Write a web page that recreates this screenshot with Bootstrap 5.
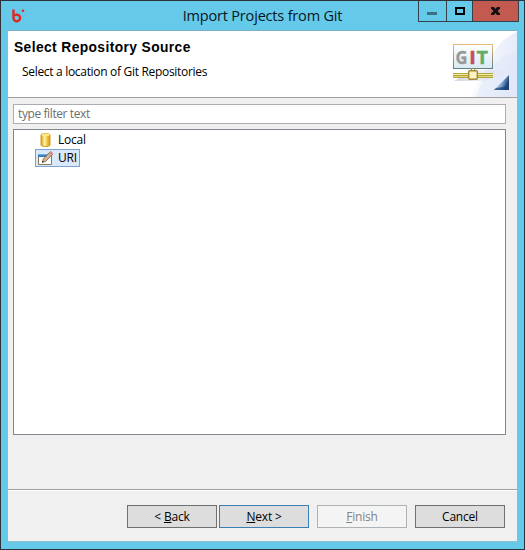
<!DOCTYPE html>
<html lang="en">
<head>
<meta charset="utf-8">
<meta name="viewport" content="width=device-width, initial-scale=1">
<title>Import Projects from Git</title>
<link href="https://cdn.jsdelivr.net/npm/bootstrap@5.3.0/dist/css/bootstrap.min.css" rel="stylesheet">
<style>
body{font-family:"Open Sans","Noto Sans",sans-serif;font-size:12px;line-height:16px;color:#000;width:525px;height:550px;overflow:hidden}
.window{width:525px;height:550px;background:#65c9e9;border:1px solid #2e3238;padding:0 7px 7px}
.titlebar{height:29px;flex:none}
.win-title{font-size:14.5px;line-height:29px;letter-spacing:-.18px;color:#06171d;white-space:nowrap}
.caption-btns{top:0;right:5px;height:21px;border:1px solid #35424b;border-top:0}
.cap{border:0;padding:0;height:20px;background:#65c9e9;display:block}
.cap+.cap{border-left:1px solid #35424b}
.cap-min{width:27px}.cap-max{width:26px}.cap-close{width:46px;background:#c35a50}
.logo-b{left:11px;top:7px}
.client{background:#f0f0f0;border-top:1px solid #7caec6;border-bottom:1px solid #8ec0d2}
.banner{height:67px;background:#fff;border-bottom:1px solid #a0a0a0;flex:none}
.banner h1{font:bold 13.8px/16px "Liberation Sans",Arial,sans-serif;margin:9px 0 0 6px;letter-spacing:.4px;white-space:nowrap}
.banner p{margin:8px 0 0 14px;letter-spacing:-.31px}
.filter{height:20px;margin:6px 11px 0 5px;border:1px solid #abadb3;border-radius:0;padding:0 4px;font-size:12px;line-height:16px;padding-bottom:1px;min-height:0;background:#fff;width:auto;color:#6d6d6d;letter-spacing:-.4px}
.filter::placeholder{color:#6d6d6d;opacity:1}
.tree{margin:5px 11px 0 5px;height:306px;border:1px solid #828790;background:#fff;padding:1px 0 0 21px;flex:none}
.node{height:18px;border:1px solid transparent;padding:0 2px 0 2px;line-height:16px;letter-spacing:-.25px}
.node.selected{background:#d9e8fb;border-color:#7da2ce}
.node svg{margin-right:4px}
.footer-bar{margin-top:54px;border-top:1px solid #a0a0a0;box-shadow:inset 0 1px #fff;padding:15px 12px 0 119px;flex:1}
.wbtn{width:90px;height:23px;padding:0;border:1px solid #707070;border-radius:0;background:#ddd;font-size:12px;line-height:20px;color:#000;letter-spacing:-.2px}
.wbtn.default{border-color:#3c7fb1;margin-left:2px}
.wbtn:disabled{background:#f4f4f4;border-color:#adb2b5;color:#838383;opacity:1}
</style>
</head>
<body>
<div class="window d-flex flex-column position-relative">
  <header class="titlebar d-flex justify-content-center">
    <svg class="logo-b position-absolute" width="16" height="16" viewBox="0 0 16 16"><path d="M1.5 1.5v8.7a3.3 3.3 0 1 0 1.2-2.8" fill="none" stroke="#e32620" stroke-width="2.4"/><circle cx="11" cy="2.7" r="1.3" fill="#e32620"/></svg>
    <span class="win-title">Import Projects from Git</span>
    <div class="caption-btns d-flex position-absolute">
      <button class="cap cap-min" aria-label="Minimize"><svg class="d-block" width="27" height="20"><path d="M8 11h10v3H8z" fill="#3b6f82"/></svg></button>
      <button class="cap cap-max" aria-label="Maximize"><svg class="d-block" width="25" height="20"><path d="M9 7h8v6H9z" fill="none" stroke="#000" stroke-width="2"/></svg></button>
      <button class="cap cap-close" aria-label="Close"><svg class="d-block" width="45" height="20"><path d="M18 6h3l1.5 2L24 6h3v1.5L24.5 10l2.5 2.5V14h-3l-1.5-2-1.5 2h-3v-1.5l2.5-2.5L18 7.5z" fill="#111"/></svg></button>
    </div>
  </header>
  <main class="client d-flex flex-column flex-grow-1">
    <section class="banner d-flex justify-content-between">
      <div><h1>Select Repository Source</h1><p>Select a location of Git Repositories</p></div>
      <svg width="75" height="66" viewBox="0 0 75 66">
        <defs>
          <linearGradient id="sky" x1="0" y1="0" x2="1" y2=".2"><stop offset="0" stop-color="#fff"/><stop offset="1" stop-color="#e6ebfa"/></linearGradient>
          <linearGradient id="frame" x2="0" y2="1"><stop offset="0" stop-color="#e5b878"/><stop offset="1" stop-color="#628184"/></linearGradient>
          <linearGradient id="panel" x2="0" y2="1"><stop offset="0" stop-color="#fff"/><stop offset="1" stop-color="#d9eaf2"/></linearGradient>
          <linearGradient id="tri" x1="0" x2="1" y2=".4"><stop offset=".2" stop-color="#d8e8f6"/><stop offset=".65" stop-color="#7ba6d6"/><stop offset="1" stop-color="#1c3f6d"/></linearGradient>
          <linearGradient id="shade"><stop offset="0" stop-color="#bdb5d3" stop-opacity=".6"/><stop offset="1" stop-color="#cfcde5" stop-opacity="0"/></linearGradient>
        </defs>
        <path d="M75 1Q57 8 49 27L28 66h47z" fill="url(#sky)"/>
        <path d="M75 22Q54 24 42 46L34 66h41z" fill="#dce4f8" opacity=".4"/>
        <path d="M12 50L30 39h37q-10 10-32 11z" fill="url(#shade)"/>
        <rect x="11.5" y="13.5" width="39" height="24" fill="url(#panel)" stroke="url(#frame)"/>
        <g font-family="Open Sans" font-size="17" font-weight="700" stroke-width=".3"><text x="13.5" y="32.5" fill="#999" stroke="#999" textLength="12" lengthAdjust="spacingAndGlyphs">G</text><text x="27" y="32.5" fill="#c64d55" stroke="#c64d55" textLength="7" lengthAdjust="spacingAndGlyphs">I</text><text x="34.5" y="32.5" fill="#62ac66" stroke="#62ac66" textLength="11.5" lengthAdjust="spacingAndGlyphs">T</text></g>
        <path d="M29.5 37v4m3-4v4" stroke="#9b9140"/>
        <path d="M11 42h40v5H11z" fill="#b2a83a"/><path d="M11 43.5h40" stroke="#f0edaa"/><path d="M11 45.5h40" stroke="#ddd577"/>
        <rect x="26.7" y="39.7" width="8.6" height="8.6" rx="1" fill="#fff0c5" stroke="#a08a32" stroke-width="1.4"/>
        <path d="M67 44v15H52z" fill="url(#tri)"/><path d="M62 56l5-3v6H52l2-2z" fill="#1c4678" opacity=".75"/>
      </svg>
    </section>
    <input class="filter form-control" placeholder="type filter text" aria-label="type filter text">
    <div class="tree d-flex flex-column align-items-start">
      <div class="node d-flex align-items-center">
        <svg width="16" height="16" viewBox="0 0 16 16"><defs><linearGradient id="gold"><stop offset="0" stop-color="#dc9a16"/><stop offset=".4" stop-color="#fff39a"/><stop offset="1" stop-color="#dc9308"/></linearGradient></defs><path d="M3 3v10c0 2 9 2 9 0V3c0-2-9-2-9 0z" fill="url(#gold)" stroke="#d29a20"/><ellipse cx="7.5" cy="3" rx="4" ry="1.4" fill="#ffe886"/></svg>
        <span>Local</span>
      </div>
      <div class="node selected d-flex align-items-center">
        <svg width="16" height="16" viewBox="0 0 16 16"><path d="M.5 4.5h13v10H.5z" fill="#fff" stroke="#8a7a4e"/><path d="M0 4h10v3H0z" fill="#397fbd"/><path d="M0 4.5h9" stroke="#79addd"/><path d="M4.3 12.5l1-3.5 7-7.3 2.4 2.3-7 7.3z" fill="#d7b38c" stroke="#6d5849" stroke-width=".8"/><path d="M11 3l1.8-2 2.5 2.4-1.8 2z" fill="#d78f87"/><path d="M4.3 12.5l.4-1.7 1.2 1.2z" fill="#222"/></svg>
        <span>URI</span>
      </div>
    </div>
    <footer class="footer-bar d-flex align-items-start">
      <button class="btn wbtn">&lt; <u>B</u>ack</button>
      <button class="btn wbtn default"><u>N</u>ext &gt;</button>
      <button class="btn wbtn ms-2" disabled><u>F</u>inish</button>
      <button class="btn wbtn ms-2">Cancel</button>
    </footer>
  </main>
</div>
<script src="https://cdn.jsdelivr.net/npm/bootstrap@5.3.0/dist/js/bootstrap.bundle.min.js"></script>
</body>
</html>
